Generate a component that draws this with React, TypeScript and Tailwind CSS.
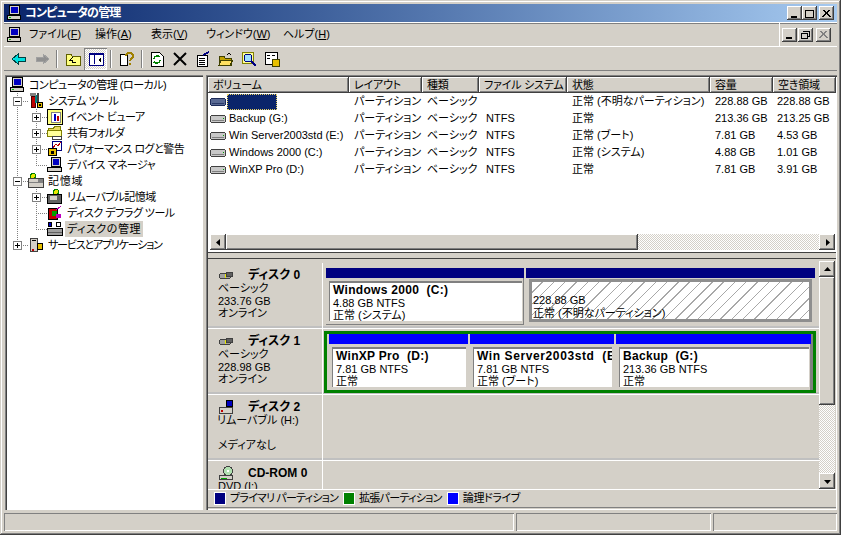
import type { ReactNode } from 'react';

const raised = 'shadow-[inset_-1px_-1px_0_#404040,inset_1px_1px_0_#fff,inset_-2px_-2px_0_#808080]';
const sunken = 'shadow-[inset_1px_1px_0_#808080,inset_2px_2px_0_#404040,inset_-1px_-1px_0_#fff]';
const thin = 'shadow-[inset_1px_1px_0_#808080,inset_-1px_-1px_0_#fff]';
const checker = 'bg-[repeating-conic-gradient(#fff_0_25%,#d4d0c8_0_50%)] bg-[length:2px_2px]';

type IconName =
  | 'pc' | 'tools' | 'event' | 'share' | 'perf' | 'device' | 'storage' | 'removable'
  | 'defrag' | 'diskmgmt' | 'services' | 'vol' | 'volsel' | 'disk' | 'usb' | 'cd';

function Icon({ name }: { name: IconName }) {
  const shapes: Record<IconName, ReactNode> = {
    pc: <><rect x="3.5" y="0.5" width="10" height="9" fill="#d4d0c8" stroke="#000" /><rect x="5" y="2" width="7" height="6" fill="#0000c0" /><rect x="1.5" y="10.5" width="13" height="4" fill="#d4d0c8" stroke="#000" /><rect x="3" y="12" width="2" height="1" fill="#00c000" /></>,
    tools: <><rect x="3" y="3" width="4" height="11" fill="#c00000" stroke="#400000" /><rect x="7" y="2" width="2" height="8" fill="#008080" /><rect x="9" y="0" width="2" height="9" fill="#404040" /><rect x="2" y="0" width="6" height="3" fill="#808080" /><rect x="9.5" y="9.5" width="5" height="5" fill="#e8c000" stroke="#000" /><rect x="11" y="11" width="2" height="2" fill="#000" /></>,
    event: <><rect x="0.5" y="0.5" width="15" height="15" fill="#ffff80" stroke="#000" /><rect x="4.5" y="3.5" width="9" height="10" fill="#fff" stroke="#808080" /><rect x="7" y="5" width="2" height="7" fill="#0000c0" /><rect x="10" y="7" width="2" height="5" fill="#c00000" /></>,
    share: <><path d="M1.5 7.5v-4h5l1-2h6v6z" fill="#e8d860" stroke="#808000" /><rect x="0.5" y="5.5" width="14" height="6" fill="#ffff99" stroke="#808000" /><ellipse cx="10" cy="13" rx="5" ry="2" fill="#fff" stroke="#404040" /></>,
    perf: <><rect x="5.5" y="0.5" width="9" height="9" fill="#fff" stroke="#000080" /><path d="M6 7l3-4 2 2 3-4" fill="none" stroke="#c00000" /><rect x="1.5" y="7.5" width="8" height="7" fill="#e8c000" stroke="#000" /><rect x="4" y="10" width="3" height="3" fill="#000" /></>,
    device: <><rect x="4.5" y="0.5" width="9" height="9" fill="#d4d0c8" stroke="#000" /><rect x="6" y="2" width="6" height="6" fill="#0000c0" /><rect x="0.5" y="10.5" width="14" height="4" fill="#d4d0c8" stroke="#000" /></>,
    storage: <><circle cx="5" cy="3" r="2.5" fill="#e8e800" stroke="#008000" /><rect x="0.5" y="5.5" width="15" height="9" fill="#d4d0c8" stroke="#404040" /><rect x="1" y="9" width="14" height="1" fill="#808080" /><rect x="10" y="6" width="5" height="3" fill="#808080" /></>,
    removable: <><circle cx="9" cy="3" r="2.5" fill="#e8e800" stroke="#008000" /><rect x="0.5" y="5.5" width="14" height="9" fill="#606060" stroke="#000" /><rect x="3" y="7" width="7" height="4" fill="#d4d0c8" /></>,
    defrag: <><rect x="1.5" y="3.5" width="9" height="11" fill="#c00000" stroke="#000" /><rect x="5" y="6" width="5" height="5" fill="#00a000" /><rect x="9" y="9" width="5" height="4" fill="#c000c0" /><path d="M9 5l5-4" stroke="#c000c0" /></>,
    diskmgmt: <><rect x="1.5" y="1.5" width="3" height="4" fill="#0000c0" stroke="#000" /><rect x="9.5" y="1.5" width="4" height="4" fill="#fff" stroke="#000" /><rect x="0.5" y="7.5" width="15" height="7" fill="#a0a0a0" stroke="#000" /><rect x="1" y="11" width="14" height="1" fill="#606060" /></>,
    services: <><rect x="2.5" y="1.5" width="7" height="13" fill="#d4d0c8" stroke="#404040" /><rect x="4" y="3" width="4" height="1" fill="#000" /><rect x="4" y="12" width="2" height="2" fill="#c00000" /><rect x="9.5" y="6.5" width="5" height="6" fill="#e8c000" stroke="#000" /></>,
    vol: <><rect x="0.5" y="4.5" width="15" height="7" rx="2" fill="#c8c8c8" stroke="#404040" /><rect x="2" y="9" width="12" height="1" fill="#808080" /><rect x="13" y="7" width="1" height="1" fill="#00a000" /></>,
    volsel: <><rect x="0.5" y="4.5" width="15" height="7" rx="2" fill="#5a6a94" stroke="#1c2a58" /><rect x="2" y="9" width="12" height="1" fill="#2a3a68" /></>,
    disk: <><rect x="1.5" y="5.5" width="11" height="5" rx="2" fill="#a0a0a0" stroke="#404040" /><rect x="8.5" y="4.5" width="6" height="4" rx="1" fill="#606060" stroke="#404040" /><rect x="7" y="6" width="1" height="4" fill="#e8e800" /></>,
    usb: <><rect x="8.5" y="0.5" width="6" height="6" fill="#0000c0" stroke="#000" /><rect x="1.5" y="7.5" width="13" height="6" fill="#d4d0c8" stroke="#404040" /><rect x="3" y="10" width="2" height="2" fill="#c00000" /></>,
    cd: <><circle cx="10" cy="5" r="4.5" fill="#b0e0b0" stroke="#404040" /><circle cx="10" cy="5" r="1" fill="#fff" /><rect x="1.5" y="9.5" width="13" height="4" fill="#d4d0c8" stroke="#404040" /><rect x="3" y="12" width="6" height="1" fill="#00a000" /></>,
  };
  return <svg width="16" height="16" viewBox="0 0 16 16" shapeRendering="crispEdges" className="shrink-0">{shapes[name]}</svg>;
}

function CaptionButton({ kind, disabled }: { kind: 'min' | 'max' | 'restore' | 'close'; disabled?: boolean }) {
  const c = disabled ? '#808080' : '#000';
  return (
    <div className={`flex h-[14px] w-[15px] items-center justify-center bg-[#d4d0c8] ${raised}`}>
      <svg width="9" height="9" viewBox="0 0 9 9" shapeRendering="crispEdges">
        {kind === 'min' && <rect x="1" y="7" width="6" height="2" fill={c} />}
        {kind === 'max' && <path d="M0.5 1.5h8v7h-8zM0 1h9" fill="none" stroke={c} />}
        {kind === 'restore' && <path d="M2.5 1.5h6v5h-2M2 1h7M0.5 3.5h6v5h-6zM0 3h7" fill="none" stroke={c} />}
        {kind === 'close' && <path d="M1 1l7 7M2 1l7 7M8 1l-7 7M7 1l-7 7" fill="none" stroke={c} />}
      </svg>
    </div>
  );
}

function Menu({ label, hot, w }: { label: string; hot: string; w: string }) {
  return (
    <span className={`${w} whitespace-nowrap`}>
      {label}(<span className="underline">{hot}</span>)
    </span>
  );
}

function ToolIcon({ name, dim }: { name: string; dim?: boolean }) {
  return (
    <svg width="16" height="16" viewBox="0 0 16 16" shapeRendering="crispEdges" className="shrink-0">
      {name === 'back' && <path d="M1 8l6-5v3h7v4H7v3z" fill="#00e0e0" stroke="#004040" />}
      {name === 'fwd' && <path d="M15 8L9 3v3H2v4h7v3z" fill="#909090" stroke={dim ? '#a0a0a0' : '#000'} />}
      {name === 'up' && <><path d="M1 3h5l1 2h8v9H1z" fill="#ffff80" stroke="#606000" /><path d="M8 6l-3 3h2v2h4" fill="none" stroke="#000" /></>}
      {name === 'pane' && <><rect x="1" y="2" width="14" height="12" fill="#fff" stroke="#000080" /><rect x="1" y="2" width="14" height="2" fill="#000080" /><rect x="6" y="4" width="1" height="9" fill="#000080" /><path d="M13 6v6l-3-3z" fill="#000" /></>}
      {name === 'help' && <><path d="M1 3h7v11H1z" fill="#fff" stroke="#000" /><path d="M7 5c0-4 7-4 7 0 0 3-3 3-3 5" fill="none" stroke="#a08000" strokeWidth="2" /><rect x="10" y="12" width="2" height="2" fill="#a08000" /></>}
      {name === 'refresh' && <><path d="M2 1h8l4 4v10H2z" fill="#fff" stroke="#000" /><path d="M5 8c0-3 4-4 6-2M11 9c0 3-4 4-6 2" fill="none" stroke="#008000" strokeWidth="1.5" /></>}
      {name === 'del' && <path d="M2 2l12 12M14 2L2 14" stroke="#000" strokeWidth="2" shapeRendering="auto" />}
      {name === 'prop' && <><rect x="2" y="4" width="10" height="11" fill="#fff" stroke="#000" /><path d="M4 7h6M4 9h6M4 11h6M4 13h6" stroke="#000" /><path d="M8 4l6-3" stroke="#000080" strokeWidth="2" /></>}
      {name === 'open' && <><path d="M1 5h5l1 2h6v7H1z" fill="#c0a000" stroke="#404000" /><path d="M3 9h12l-3 5H1z" fill="#ffe060" stroke="#404000" /><path d="M9 4c1-2 3-2 4 0" fill="none" stroke="#000" /></>}
      {name === 'find' && <><rect x="1" y="1" width="11" height="11" fill="#ffff99" stroke="#808000" /><circle cx="7" cy="7" r="4" fill="#a0e0ff" stroke="#000080" /><path d="M10 10l5 5" stroke="#000080" strokeWidth="2" /></>}
      {name === 'gear' && <><rect x="1" y="1" width="12" height="12" fill="#fff" stroke="#000" /><path d="M3 4h3M3 7h3M8 4h3" stroke="#000" /><rect x="8" y="8" width="7" height="7" fill="#e8c000" stroke="#404000" /></>}
    </svg>
  );
}

function Sep({ tight }: { tight?: boolean }) {
  return <div className={`ml-[3px] h-[18px] w-[2px] border-l border-l-[#808080] border-r border-r-white ${tight ? 'mr-[2px]' : 'mr-[3px]'}`} />;
}

function ToolBtn({ name, dim, active }: { name: string; dim?: boolean; active?: boolean }) {
  return (
    <div className={`flex h-[22px] w-[23px] items-center justify-center ${active ? `${checker} shadow-[inset_1px_1px_0_#808080,inset_-1px_-1px_0_#fff]` : ''}`}>
      <ToolIcon name={name} dim={dim} />
    </div>
  );
}

const tree: { depth: number; icon: IconName; label: string; box?: '+' | '-'; cont: boolean[]; selected?: boolean; track?: string }[] = [
  { depth: 0, icon: 'pc', label: 'コンピュータの管理 (ローカル)', cont: [] },
  { depth: 1, icon: 'tools', label: 'システム ツール', box: '-', cont: [true] },
  { depth: 2, icon: 'event', label: 'イベント ビューア', box: '+', cont: [true, true] },
  { depth: 2, icon: 'share', label: '共有フォルダ', box: '+', cont: [true, true] },
  { depth: 2, icon: 'perf', label: 'パフォーマンス ログと警告', box: '+', cont: [true, true] },
  { depth: 2, icon: 'device', label: 'デバイス マネージャ', cont: [true, false] },
  { depth: 1, icon: 'storage', label: '記憶域', box: '-', cont: [true], track: 'tracking-[0.7px]' },
  { depth: 2, icon: 'removable', label: 'リムーバブル記憶域', box: '+', cont: [true, true] },
  { depth: 2, icon: 'defrag', label: 'ディスク デフラグ ツール', cont: [true, true] },
  { depth: 2, icon: 'diskmgmt', label: 'ディスクの管理', cont: [true, false], selected: true, track: 'tracking-[0.5px]' },
  { depth: 1, icon: 'services', label: 'サービスとアプリケーション', box: '+', cont: [false], track: 'tracking-[-1.2px]' },
];

function TreeLines({ depth, box, cont }: { depth: number; box?: '+' | '-'; cont: boolean[] }) {
  if (depth === 0) return <div className="w-[2px] shrink-0" />;
  const w = depth * 19 + 2;
  const cx = (depth - 1) * 19 + 10;
  const dots = '1 1';
  return (
    <svg width={w} height="16" viewBox={`0 0 ${w} 16`} shapeRendering="crispEdges" className="shrink-0">
      {depth === 2 && cont[0] && <path d="M10.5 0v16" stroke="#808080" strokeDasharray={dots} />}
      <path d={`M${cx + 0.5} 0v${cont[depth - 1] ? 16 : 8}`} stroke="#808080" strokeDasharray={dots} />
      <path d={`M${cx} 8.5h${w - cx}`} stroke="#808080" strokeDasharray={dots} />
      {box && (
        <>
          <rect x={cx - 4 + 0.5} y="4.5" width="8" height="8" fill="#fff" stroke="#808080" />
          <path d={`M${cx - 2} 8.5h5`} stroke="#000" />
          {box === '+' && <path d={`M${cx + 0.5} 6v5`} stroke="#000" />}
        </>
      )}
    </svg>
  );
}

const cols = [
  { label: 'ボリューム', w: 'w-[141px]' },
  { label: 'レイアウト', w: 'w-[73px]' },
  { label: '種類', w: 'w-[57px]' },
  { label: 'ファイル システム', w: 'w-[88px]' },
  { label: '状態', w: 'w-[143px]' },
  { label: '容量', w: 'w-[63px]' },
  { label: '空き領域', w: 'w-[63px]' },
];

const volumes = [
  { name: '', fs: '', status: '正常 (不明なパーティション)', size: '228.88 GB', free: '228.88 GB', sel: true },
  { name: 'Backup (G:)', fs: 'NTFS', status: '正常', size: '213.36 GB', free: '213.25 GB' },
  { name: 'Win Server2003std (E:)', fs: 'NTFS', status: '正常 (ブート)', size: '7.81 GB', free: '4.53 GB' },
  { name: 'Windows 2000 (C:)', fs: 'NTFS', status: '正常 (システム)', size: '4.88 GB', free: '1.01 GB' },
  { name: 'WinXP Pro (D:)', fs: 'NTFS', status: '正常', size: '7.81 GB', free: '3.91 GB' },
];

function ScrollArrow({ dir }: { dir: 'l' | 'r' | 'u' | 'd' }) {
  const d = { l: 'M6 1v7L2 4.5z', r: 'M3 1v7l4-3.5z', u: 'M1 6h7L4.5 2z', d: 'M1 3h7L4.5 7z' }[dir];
  return (
    <div className={`flex h-[16px] w-[16px] shrink-0 items-center justify-center bg-[#d4d0c8] ${raised}`}>
      <svg width="9" height="9" viewBox="0 0 9 9"><path d={d} fill="#000" /></svg>
    </div>
  );
}

function DiskLabel({ icon, title, lines }: { icon: IconName; title: string; lines: string[] }) {
  return (
    <div className="w-[115px] shrink-0 overflow-hidden border-r border-r-white pl-[10px] pt-[6px] leading-[12.5px]">
      <div className="flex h-[13px] items-center gap-[14px]">
        <Icon name={icon} />
        <span className="text-[12px] font-bold whitespace-nowrap">{title}</span>
      </div>
      {lines.map((l, i) => (
        <div key={i} className="h-[12.5px] whitespace-nowrap">{l}</div>
      ))}
    </div>
  );
}

function PartBody({ title, lines, track }: { title: string; lines: string[]; track?: string }) {
  return (
    <div className="h-full overflow-hidden border-t-2 border-l border-[#808080] bg-white pl-[3px] pt-[1px] leading-[12.5px]">
      <div className={`text-[12px] font-bold whitespace-pre ${track ?? 'tracking-[0.3px]'}`}>{title}</div>
      {lines.map((l) => (
        <div key={l} className="whitespace-nowrap">{l}</div>
      ))}
    </div>
  );
}

export default function App() {
  return (
    <div className="flex h-[535px] w-[841px] flex-col overflow-hidden bg-[#d4d0c8] p-[4px] text-[11px] leading-none text-black font-['Liberation_Sans','Noto_Sans_CJK_JP',sans-serif] [font-feature-settings:'palt'] shadow-[inset_-1px_-1px_0_#404040,inset_1px_1px_0_#d4d0c8,inset_-2px_-2px_0_#808080,inset_2px_2px_0_#fff]">
      {/* title bar */}
      <div className="flex h-[18px] shrink-0 items-center bg-gradient-to-r from-[#0a246a] to-[#a6caf0] pl-[2px] pr-[3px]">
        <Icon name="pc" />
        <span className="ml-[3px] flex-1 text-[12px] font-bold tracking-[-0.8px] text-white">コンピュータの管理</span>
        <CaptionButton kind="min" />
        <CaptionButton kind="max" />
        <div className="w-[2px]" />
        <CaptionButton kind="close" />
      </div>

      {/* menu */}
      <div className="flex h-[25px] shrink-0 items-center border-y border-y-white pl-[2px] shadow-[inset_0_1px_0_#808080]">
        <Icon name="pc" />
        <div className="ml-[7px] flex flex-1">
          <Menu label="ファイル" hot="F" w="w-[66px]" />
          <Menu label="操作" hot="A" w="w-[56px]" />
          <Menu label="表示" hot="V" w="w-[55px]" />
          <Menu label="ウィンドウ" hot="W" w="w-[77px]" />
          <Menu label="ヘルプ" hot="H" w="w-[50px]" />
        </div>
        <div className="flex h-full items-center border-l border-l-white pl-[2px] pr-[6px]">
          <CaptionButton kind="min" />
          <div className="w-[1px]" />
          <CaptionButton kind="restore" />
          <div className="w-[3px]" />
          <CaptionButton kind="close" disabled />
        </div>
      </div>

      {/* toolbar */}
      <div className="flex h-[24px] shrink-0 items-center border-b border-b-[#808080] pl-[3px]">
        <ToolBtn name="back" />
        <ToolBtn name="fwd" dim />
        <Sep />
        <ToolBtn name="up" />
        <ToolBtn name="pane" active />
        <Sep />
        <ToolBtn name="help" />
        <Sep tight />
        <ToolBtn name="refresh" />
        <ToolBtn name="del" />
        <ToolBtn name="prop" />
        <ToolBtn name="open" />
        <ToolBtn name="find" />
        <ToolBtn name="gear" />
      </div>

      {/* main */}
      <div className="mt-[4px] flex h-[435px] shrink-0 gap-[3px] pl-[1px]">
        {/* tree */}
        <div className={`w-[198px] shrink-0 bg-white pl-[2px] pt-[2px] ${sunken}`}>
          {tree.map((t) => (
            <div key={t.label} className="flex h-[16px] items-center">
              <TreeLines depth={t.depth} box={t.box} cont={t.cont} />
              <Icon name={t.icon} />
              <span className={`ml-[2px] whitespace-nowrap px-[2px] leading-[16px] ${t.track ?? 'tracking-[-0.5px]'} ${t.selected ? 'bg-[#d4d0c8]' : ''}`}>{t.label}</span>
            </div>
          ))}
        </div>

        {/* right */}
        <div className={`flex w-[631px] shrink-0 flex-col pl-[2px] pr-[1px] pt-[2px] ${sunken}`}>
          {/* list */}
          <div className="flex h-[175px] shrink-0 flex-col bg-white">
            <div className="flex h-[16px] shrink-0">
              {cols.map((c) => (
                <div key={c.label} className={`${c.w} flex shrink-0 items-center bg-[#d4d0c8] pl-[5px] tracking-[-0.2px] whitespace-nowrap ${raised}`}>{c.label}</div>
              ))}
            </div>
            <div className="flex-1">
              {volumes.map((v, i) => (
                <div key={i} className="flex h-[17px] items-center whitespace-nowrap">
                  <div className="flex w-[141px] shrink-0 items-center pl-[2px]">
                    <Icon name={v.sel ? 'volsel' : 'vol'} />
                    {v.sel ? (
                      <div className="ml-[1px] h-[16px] w-[50px] border border-dotted border-[#e8d060] bg-[#0a246a]" />
                    ) : (
                      <span className="ml-[3px]">{v.name}</span>
                    )}
                  </div>
                  <div className="w-[73px] shrink-0 pl-[5px]">パーティション</div>
                  <div className="w-[57px] shrink-0 pl-[5px]">ベーシック</div>
                  <div className="w-[88px] shrink-0 pl-[7px]">{v.fs}</div>
                  <div className="w-[143px] shrink-0 pl-[5px]">{v.status}</div>
                  <div className="w-[63px] shrink-0 pl-[5px]">{v.size}</div>
                  <div className="w-[63px] shrink-0 pl-[4px]">{v.free}</div>
                </div>
              ))}
            </div>
            <div className="mb-[2px] flex h-[16px] shrink-0 pl-[2px] pr-[1px]">
              <ScrollArrow dir="l" />
              <div className={`w-[412px] shrink-0 bg-[#d4d0c8] ${raised}`} />
              <div className={`flex-1 ${checker}`} />
              <ScrollArrow dir="r" />
            </div>
          </div>

          {/* splitter */}
          <div className="h-[7px] shrink-0 border-y border-y-[#404040]" />

          {/* graphical view */}
          <div className="flex min-h-0 flex-1 flex-col">
            <div className="flex h-[230px] shrink-0">
              <div className="flex-1 overflow-hidden pt-[4px]">
                <div className="flex h-[66px] border-b border-b-white shadow-[inset_0_-2px_0_#c0c0c0]">
                  <DiskLabel icon="disk" title="ディスク 0" lines={['ベーシック', '233.76 GB', 'オンライン']} />
                  <div className="flex gap-[2px] pl-[3px] pt-[5px]">
                    <div className="w-[198px]">
                      <div className="h-[10px] bg-[#000080]" />
                      <div className="h-[47px] bg-[#d4d0c8] p-[3px] pb-[4px] pr-[2px] shadow-[inset_-1px_-1px_0_#808080]">
                        <PartBody title="Windows 2000  (C:)" lines={['4.88 GB NTFS', '正常 (システム)']} />
                      </div>
                    </div>
                    <div className="w-[289px]">
                      <div className="h-[10px] bg-[#000080]" />
                      <div className="h-[46px] px-[3px] pt-[1px]">
                        <div className="h-[43px] border-[3px] border-[#8e8e8e] bg-[repeating-linear-gradient(135deg,#fff_0,#fff_7px,#a8a8a8_7px,#a8a8a8_8px)] pl-[1px] pt-[12px] leading-[12.5px]">
                          <div>228.88 GB</div>
                          <div className="whitespace-nowrap">正常 (不明なパーティション)</div>
                        </div>
                      </div>
                    </div>
                  </div>
                </div>

                <div className="flex h-[66px] border-b border-b-white shadow-[inset_0_-2px_0_#c0c0c0]">
                  <DiskLabel icon="disk" title="ディスク 1" lines={['ベーシック', '228.98 GB', 'オンライン']} />
                  <div className="ml-[1px] mt-[2px] flex h-[62px] w-[492px] gap-[2px] border-[3px] border-[#008000] bg-[#d4d0c8] pl-[2px] shadow-[inset_-3px_0_0_#808080]">
                    {[
                      { w: 'w-[139px]', t: 'WinXP Pro  (D:)', l: ['7.81 GB NTFS', '正常'] },
                      { w: 'w-[144px]', t: 'Win Server2003std  (E:)', l: ['7.81 GB NTFS', '正常 (ブート)'], track: 'tracking-[0.6px]' },
                      { w: 'w-[195px]', t: 'Backup  (G:)', l: ['213.36 GB NTFS', '正常'] },
                    ].map((p) => (
                      <div key={p.t} className={p.w}>
                        <div className="h-[10px] bg-[#0000ff]" />
                        <div className="h-[46px] py-[3px] pl-[3px] pr-[2px]">
                          <PartBody title={p.t} lines={p.l} track={p.track} />
                        </div>
                      </div>
                    ))}
                  </div>
                </div>

                <div className="flex h-[66px] border-b border-b-white shadow-[inset_0_-2px_0_#c0c0c0]">
                  <div className="w-[115px] shrink-0 border-r border-r-white pl-[10px] pt-[6px] leading-[12.5px]">
                    <div className="flex h-[13px] items-center gap-[14px]">
                      <Icon name="usb" />
                      <span className="text-[12px] font-bold whitespace-nowrap">ディスク 2</span>
                    </div>
                    <div className="-ml-[1px] whitespace-nowrap">リムーバブル (H:)</div>
                    <div className="mt-[12.5px]">メディアなし</div>
                  </div>
                </div>

                <div className="flex h-[66px]">
                  <DiskLabel icon="cd" title="CD-ROM 0" lines={['DVD (I:)']} />
                </div>
              </div>
              <div className="flex w-[17px] shrink-0 flex-col pr-[1px] pt-[2px]">
                <ScrollArrow dir="u" />
                <div className={`h-[128px] shrink-0 bg-[#d4d0c8] ${raised}`} />
                <div className={`flex-1 ${checker}`} />
                <ScrollArrow dir="d" />
              </div>
            </div>

            {/* legend */}
            <div className="flex h-[19px] shrink-0 items-center gap-[5px] border-y border-t-white border-b-[#808080] pl-[6px]">
              {[
                { c: 'bg-[#000080]', l: 'プライマリ パーティション', t: 'tracking-[-0.8px]' },
                { c: 'bg-[#008000]', l: '拡張パーティション', t: 'tracking-[-0.7px]' },
                { c: 'bg-[#0000ff]', l: '論理ドライブ', t: 'tracking-[-0.4px]' },
              ].map((x) => (
                <div key={x.l} className="flex items-center gap-[4px] whitespace-nowrap">
                  <div className={`h-[13px] w-[12px] border border-white ${x.c}`} />
                  <span className={x.t}>{x.l}</span>
                </div>
              ))}
            </div>
          </div>
        </div>
      </div>

      {/* status bar */}
      <div className="mt-[3px] flex h-[18px] shrink-0 gap-[2px]">
        <div className={`w-[510px] ${thin}`} />
        <div className={`w-[195px] ${thin}`} />
        <div className={`flex-1 ${thin}`} />
      </div>
    </div>
  );
}
